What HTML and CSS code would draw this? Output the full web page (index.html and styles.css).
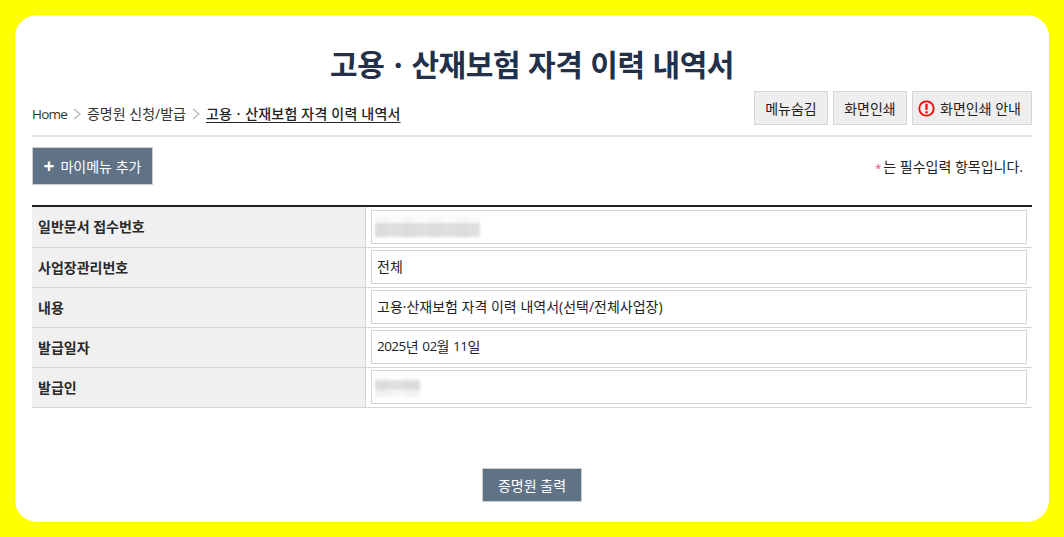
FILE: index.html
```html
<!DOCTYPE html>
<html lang="ko">
<head>
<meta charset="utf-8">
<title>고용ㆍ산재보험 자격 이력 내역서</title>
<link rel="stylesheet" href="styles.css">
</head>
<body>
<main class="card">
  <h1 class="title">고용ㆍ산재보험 자격 이력 내역서</h1>
  <div class="topbar">
    <nav class="crumbs">
      <span class="home">Home</span>
      <svg width="8" height="12" viewBox="0 0 8 12"><path d="M1 1l6 5-6 5" fill="none" stroke="#b0b0b0" stroke-width="1.1"/></svg>
      <span>증명원 신청/발급</span>
      <svg width="8" height="12" viewBox="0 0 8 12"><path d="M1 1l6 5-6 5" fill="none" stroke="#b0b0b0" stroke-width="1.1"/></svg>
      <a class="current">고용ㆍ산재보험 자격 이력 내역서</a>
    </nav>
    <div class="tools">
      <button class="tool w74">메뉴숨김</button>
      <button class="tool w74">화면인쇄</button>
      <button class="tool info">
        <svg width="17" height="17" viewBox="0 0 17 17"><circle cx="8.5" cy="8.5" r="7.2" fill="none" stroke="#f00" stroke-width="1.8"/><path d="M8.5 3.8v6" stroke="#f00" stroke-width="2.2"/><path d="M8.5 11.2v2.2" stroke="#f00" stroke-width="2.2"/></svg>
        화면인쇄 안내
      </button>
    </div>
  </div>
  <div class="actions">
    <button class="mymenu"><span class="plus">+</span>마이메뉴 추가</button>
    <p class="req"><span class="star">*</span>는 필수입력 항목입니다.</p>
  </div>
  <div class="table">
    <div class="row"><div class="th">일반문서 접수번호</div><div class="td"><div class="field"><span class="blur b1"></span></div></div></div>
    <div class="row"><div class="th">사업장관리번호</div><div class="td"><div class="field">전체</div></div></div>
    <div class="row"><div class="th">내용</div><div class="td"><div class="field">고용·산재보험 자격 이력 내역서(선택/전체사업장)</div></div></div>
    <div class="row"><div class="th">발급일자</div><div class="td"><div class="field"><span class="num">2025</span>년 <span class="num">02</span>월 <span class="num">11</span>일</div></div></div>
    <div class="row"><div class="th">발급인</div><div class="td"><div class="field"><span class="blur b2"></span></div></div></div>
  </div>
  <div class="footer"><button class="print">증명원 출력</button></div>
</main>
</body>
</html>
```
FILE: styles.css
```css
* { box-sizing: border-box; }
html, body { margin: 0; height: 100%; }
body {
  background: #ffff00;
  padding: 15px;
  font-family: "Open Sans", "Noto Sans CJK KR", sans-serif;
  font-size: 14px;
  color: #222;
}
button { font: inherit; cursor: pointer; }
.card {
  height: 507px;
  background: #fff;
  border-radius: 22px;
  padding: 0 17px;
  display: flex;
  flex-direction: column;
}
.title {
  margin: 27px 0 0;
  height: 42px;
  line-height: 42px;
  font-family: "Noto Sans CJK KR", sans-serif;
  font-size: 30px;
  font-weight: 700;
  text-align: center;
  color: #22304a;
  letter-spacing: -0.45px;
}
.topbar {
  margin-top: 7px;
  height: 46px;
  border-bottom: 2px solid #e5e5e5;
  display: flex;
  justify-content: space-between;
  align-items: flex-start;
}
.crumbs {
  margin-top: 9px;
  display: flex;
  align-items: center;
  gap: 6px;
  line-height: 28px;
  color: #333;
}
.home { font-size: 13.5px; letter-spacing: -0.8px; }
.current {
  color: #222;
  font-weight: 500;
  letter-spacing: 0.2px;
  text-decoration: underline;
  text-underline-offset: 3px;
}
.tools { display: flex; gap: 5px; }
.tool {
  height: 34px;
  padding: 0;
  background: #eee;
  border: 1px solid #d5d5d5;
  color: #222;
  display: flex;
  align-items: center;
  justify-content: center;
  gap: 5px;
}
.w74 { width: 74px; }
.info { width: 120px; justify-content: flex-start; padding-left: 5px; }
.actions {
  margin-top: 10px;
  height: 38px;
  display: flex;
  justify-content: space-between;
  align-items: center;
}
.mymenu {
  width: 121px;
  height: 38px;
  padding: 0;
  background: #607286;
  border: 1px solid #ccc;
  color: #fff;
  display: flex;
  align-items: center;
  justify-content: center;
}
.plus { font-size: 19px; font-weight: 700; line-height: 1; margin-right: 6px; }
.req { margin: 0 9px 0 0; color: #222; }
.star { color: #e8447a; margin-right: 2px; font-size: 11px; }
.table { margin-top: 20px; border-top: 2px solid #222; }
.row { display: flex; height: 40px; border-bottom: 1px solid #d5d5d5; }
.row:first-child { height: 41px; padding-top: 1px; }
.th {
  width: 334px;
  flex: none;
  padding: 0 0 2px 6px;
  background: #f0f0f0;
  border-right: 1px solid #d5d5d5;
  display: flex;
  align-items: center;
  font-weight: 700;
  color: #2a2a2a;
}
.row:first-child .th { margin-top: -1px; }
.td { flex: 1; padding: 2px 5px 3px; }
.field {
  height: 34px;
  border: 1px solid #d5d5d5;
  padding: 0 5px 2px;
  display: flex;
  align-items: center;
  color: #222;
  white-space: pre;
}
.num { font-size: 13.5px; letter-spacing: -0.55px; }
.blur { display: block; filter: blur(1.5px); margin-left: -2px; }
.b1 {
  width: 105px;
  height: 24px;
  margin-top: 2px;
  background:
    repeating-linear-gradient(90deg, rgba(0,0,0,.015) 0 13px, transparent 13px 27px),
    linear-gradient(#fbfbfb 0 33%, #dfdfdf 33% 92%, #fff 92%);
}
.b2 {
  width: 45px;
  height: 20px;
  margin-top: 2px;
  background:
    repeating-linear-gradient(90deg, rgba(0,0,0,.015) 0 15px, transparent 15px 30px),
    linear-gradient(#fff 0 15%, #dfdfdf 15% 65%, #f6f6f6 65%);
}
.footer { margin-top: 60px; display: flex; justify-content: center; }
.print {
  width: 100px;
  height: 34px;
  padding: 0;
  background: #607286;
  border: 1px solid #ccc;
  color: #fff;
}
```
